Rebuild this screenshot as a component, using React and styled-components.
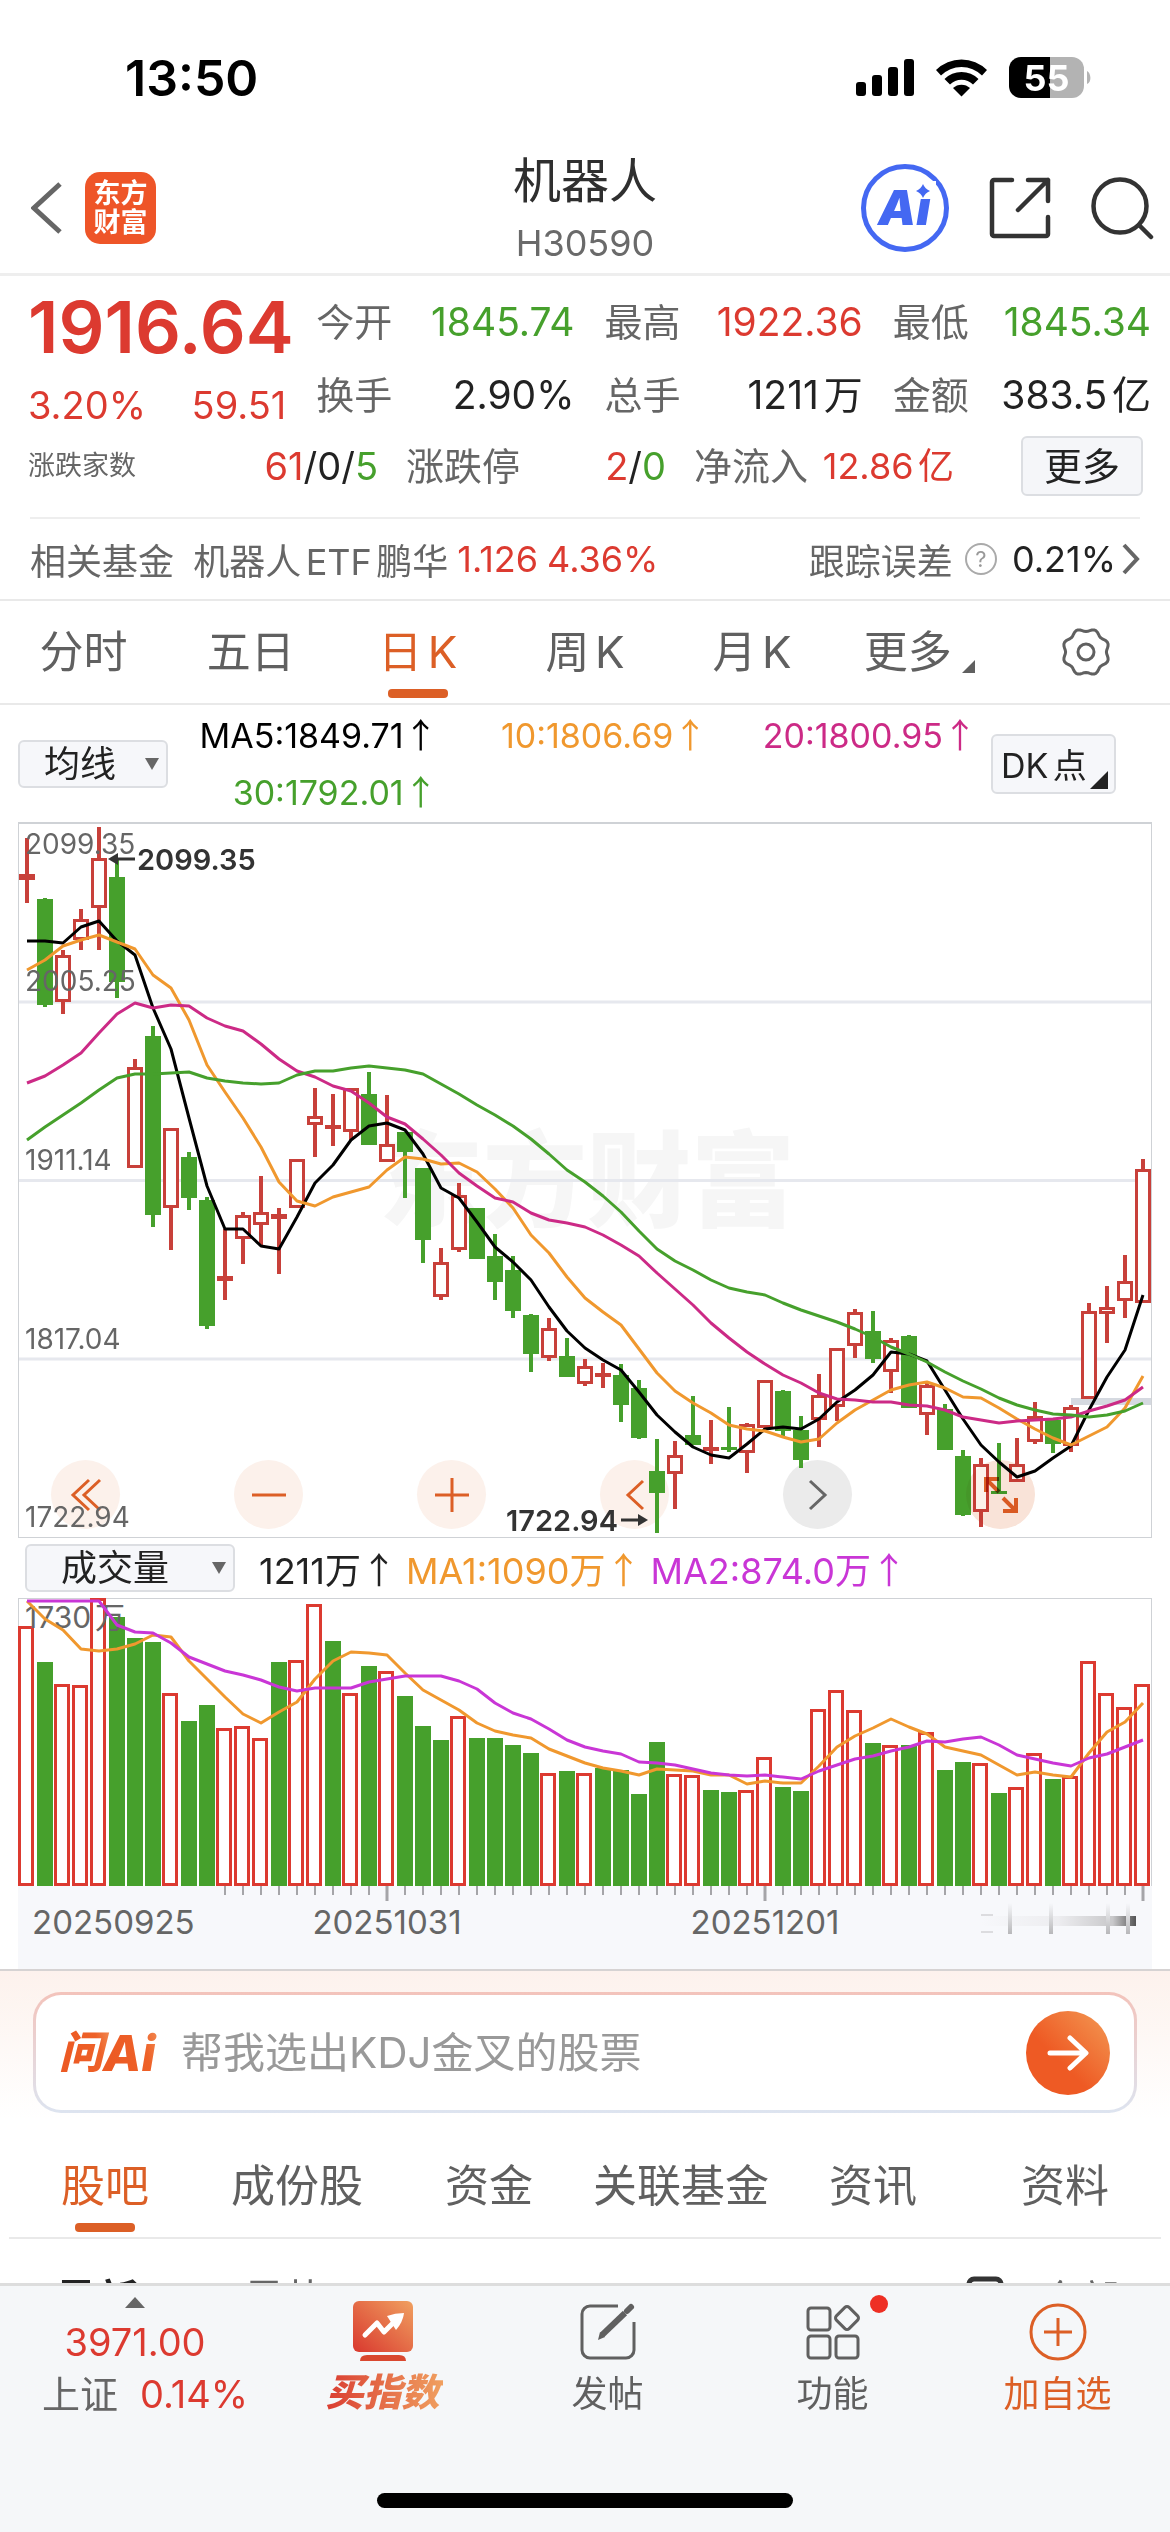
import { Fragment } from 'react';
import styled, { createGlobalStyle } from 'styled-components';

const RED = '#dc3a30';
const GREEN = '#46a02c';
const ORANGE = '#dc5f26';

const GlobalStyle = createGlobalStyle`
  * {
    box-sizing: border-box;
  }
  body {
    margin: 0;
    background: #fff;
    font-family: Inter, 'Noto Sans CJK SC', sans-serif;
    text-autospace: normal;
    color: #222;
  }
  button, select, input {
    font-family: inherit;
    margin: 0;
    padding: 0;
    border: 0;
    background: none;
    color: inherit;
  }
  svg {
    display: block;
    flex: none;
  }
`;

/* ---------- data ---------- */

// [rising, high, body top, body bottom, low]
const candles = [
  [1, 16, 52, 58, 81], [0, 76, 77, 183, 185], [1, 128, 133, 180, 192], [1, 87, 97, 118, 128],
  [1, 5, 36, 86, 128], [0, 38, 55, 160, 176], [1, 237, 245, 346, 346], [0, 204, 214, 393, 405],
  [1, 306, 306, 386, 428], [0, 330, 335, 376, 388], [0, 375, 378, 504, 507], [1, 407, 454, 459, 478],
  [1, 390, 393, 417, 442], [1, 354, 390, 403, 424], [1, 386, 392, 397, 452], [1, 337, 337, 386, 386],
  [1, 266, 294, 303, 335], [1, 272, 303, 307, 324], [1, 266, 266, 310, 318], [0, 250, 272, 323, 323],
  [1, 273, 322, 340, 340], [0, 310, 310, 330, 376], [0, 346, 346, 418, 441], [1, 426, 440, 475, 478],
  [1, 361, 373, 428, 430], [0, 386, 386, 437, 437], [0, 412, 434, 460, 478], [0, 434, 448, 489, 496],
  [0, 492, 493, 532, 550], [1, 496, 506, 536, 539], [0, 516, 534, 555, 555], [1, 537, 544, 562, 564],
  [1, 541, 551, 555, 566], [0, 542, 553, 583, 600], [0, 558, 566, 616, 617], [0, 617, 649, 671, 711],
  [1, 619, 633, 652, 687], [0, 574, 613, 623, 623], [1, 598, 625, 629, 642], [0, 585, 625, 627, 630],
  [1, 601, 602, 631, 651], [1, 558, 558, 606, 607], [0, 568, 569, 609, 616], [0, 594, 608, 638, 646],
  [1, 552, 573, 598, 625], [1, 526, 526, 585, 599], [1, 487, 490, 524, 536], [0, 489, 509, 537, 541],
  [1, 516, 518, 550, 571], [0, 513, 514, 586, 586], [1, 561, 563, 593, 613], [0, 582, 587, 628, 628],
  [0, 628, 634, 693, 694], [1, 636, 642, 690, 705], [0, 621, 669, 672, 672], [1, 616, 642, 660, 660],
  [1, 580, 594, 620, 622], [0, 598, 598, 622, 631], [1, 583, 585, 624, 630], [1, 481, 489, 577, 577],
  [1, 464, 485, 492, 521], [1, 433, 459, 479, 496], [1, 337, 347, 481, 481],
];

const ma30 = [318, 305, 293, 281, 268, 256, 252, 252, 251, 250, 256, 259, 261, 262, 261, 253, 249, 249, 246, 244, 246, 248, 252, 262, 272, 283, 293, 304, 317, 332, 348, 360, 374, 390, 409, 427, 439, 448, 458, 466, 470, 473, 481, 488, 494, 500, 507, 515, 525, 532, 540, 550, 559, 567, 576, 583, 588, 592, 593, 595, 593, 589, 581];
const ma20 = [261, 254, 243, 231, 211, 192, 181, 186, 183, 184, 196, 204, 209, 222, 237, 249, 255, 264, 269, 281, 295, 302, 317, 333, 351, 364, 376, 380, 391, 398, 401, 405, 413, 423, 434, 451, 467, 483, 501, 516, 530, 542, 553, 561, 571, 577, 578, 580, 580, 583, 584, 588, 595, 598, 601, 599, 598, 597, 595, 589, 584, 578, 565];
const ma10 = [148, 138, 124, 118, 113, 120, 127, 153, 166, 198, 243, 270, 296, 325, 360, 379, 384, 375, 370, 365, 348, 335, 337, 342, 341, 350, 367, 386, 413, 431, 455, 476, 490, 503, 527, 551, 569, 581, 591, 603, 607, 609, 615, 620, 617, 601, 588, 578, 568, 563, 560, 566, 575, 576, 586, 597, 607, 616, 623, 614, 605, 586, 554];
const ma5 = [119, 119, 121, 105, 99, 119, 133, 186, 227, 296, 364, 407, 407, 424, 427, 395, 361, 343, 318, 304, 301, 308, 332, 366, 376, 400, 425, 440, 458, 485, 509, 526, 538, 548, 570, 593, 610, 625, 633, 636, 622, 607, 605, 607, 597, 580, 568, 553, 530, 532, 539, 568, 597, 623, 640, 655, 649, 636, 624, 588, 555, 528, 473];

// [rising, top]
const volumes = [
  [1, 28], [0, 64], [1, 86], [1, 87], [1, 0], [0, 19], [0, 40], [0, 44], [1, 95], [0, 123], [0, 107],
  [1, 130], [1, 128], [1, 140], [0, 64], [1, 62], [1, 6], [0, 43], [1, 95], [0, 68], [1, 73], [0, 98],
  [0, 128], [0, 142], [1, 118], [0, 140], [0, 140], [0, 147], [0, 155], [1, 175], [0, 173], [1, 175],
  [0, 170], [0, 172], [0, 196], [0, 144], [1, 176], [1, 177], [0, 192], [0, 194], [1, 192], [1, 159],
  [0, 189], [0, 193], [1, 111], [1, 92], [1, 112], [0, 145], [1, 147], [0, 147], [1, 134], [0, 172],
  [0, 164], [1, 165], [0, 195], [1, 189], [1, 155], [0, 181], [1, 178], [1, 63], [1, 95], [1, 109], [1, 86],
];

const vma1 = [3, 21, 32, 51, 53, 51, 46, 37, 39, 63, 81, 99, 116, 125, 114, 104, 81, 63, 54, 55, 57, 75, 92, 102, 112, 125, 133, 137, 140, 151, 158, 165, 170, 173, 177, 171, 172, 173, 177, 177, 186, 183, 185, 185, 168, 149, 138, 130, 121, 129, 136, 149, 153, 157, 167, 177, 174, 177, 179, 155, 134, 124, 105];
const vma2 = [3, 3, 3, 3, 3, 27, 34, 35, 45, 59, 66, 73, 77, 82, 89, 93, 90, 90, 90, 84, 81, 78, 78, 78, 83, 91, 105, 115, 121, 131, 142, 149, 153, 156, 164, 165, 167, 171, 175, 177, 178, 177, 179, 181, 173, 167, 161, 158, 153, 149, 143, 144, 141, 139, 147, 157, 161, 165, 168, 160, 156, 149, 142];

const STEP = 18;
const cx = (i) => 9 + i * STEP;
const toPoints = (ys) => ys.map((y, i) => `${cx(i)},${y}`).join(' ');

/* ---------- status bar ---------- */

const Page = styled.div`
  display: flex;
  flex-direction: column;
  height: 100vh;
  overflow: hidden;
`;

const StatusBar = styled.div`
  flex: none;
  display: flex;
  justify-content: space-between;
  align-items: center;
  height: 150px;
  padding: 6px 78px 0 125px;
  color: #000;
  font-size: 50px;
  font-weight: 600;
`;

const StatusIcons = styled.div`
  display: flex;
  align-items: center;
  gap: 22px;
`;

const Battery = () => (
  <svg width="83" height="42" viewBox="0 0 83 42">
    <defs>
      <linearGradient id="charge">
        <stop offset="55%" stopColor="#000" />
        <stop offset="55%" stopColor="#b3b3b3" />
      </linearGradient>
    </defs>
    <rect x="0" y="0" width="75" height="41" rx="12" fill="url(#charge)" />
    <path d="M78 14c4 2 5 11 0 13z" fill="#b3b3b3" />
    <text x="37.5" y="34" textAnchor="middle" fontSize="36" fontWeight="700" fill="#fff">
      55
    </text>
  </svg>
);

const SignalIcons = () => (
  <>
    <svg width="58" height="38" viewBox="0 0 58 38">
      <rect x="0" y="23" width="10" height="14" rx="3" />
      <rect x="16" y="16" width="10" height="21" rx="3" />
      <rect x="32" y="8" width="10" height="29" rx="3" />
      <rect x="48" y="0" width="10" height="37" rx="3" />
    </svg>
    <svg width="51" height="38" viewBox="0 0 51 38">
      <path d="M0 11a36 36 0 0 1 51 0l-5 5.500a29 29 0 0 0-41 0z" />
      <path d="M8.500 20a24 24 0 0 1 34 0l-5.500 5.500a16.500 16.500 0 0 0-23 0z" />
      <path d="M17 29a12.500 12.500 0 0 1 17 0l-8.500 8.500z" />
    </svg>
  </>
);

/* ---------- header ---------- */

const Header = styled.header`
  flex: none;
  display: grid;
  grid-template-columns: 1fr auto 1fr;
  align-items: center;
  height: 126px;
  padding: 0 16px;
  border-bottom: 3px solid #eee;
`;

const HeaderSide = styled.div`
  display: flex;
  align-items: center;
  justify-content: ${(p) => (p.$end ? 'flex-end' : 'flex-start')};
  gap: ${(p) => (p.$end ? 40 : 23)}px;
  padding: 0 0 16px ${(p) => (p.$end ? 0 : 15)}px;
`;

const Brand = styled.span`
  display: grid;
  place-content: center;
  width: 71px;
  height: 72px;
  border-radius: 15px;
  background: #ee5528;
  color: #fff;
  font-size: 27px;
  line-height: 29px;
  font-weight: 700;
  text-align: center;
`;

const Titles = styled.div`
  padding-bottom: 8px;
  text-align: center;
`;

const Title = styled.h1`
  margin: 0;
  font-size: 48px;
  line-height: 62px;
  font-weight: 400;
  color: #2f2f2f;
`;

const Code = styled.div`
  color: #6a6a6a;
  font-size: 36px;
  line-height: 62px;
`;

const IconButton = styled.button`
  display: block;
`;

/* ---------- quote ---------- */

const Quote = styled.section`
  flex: none;
  padding: 9px 19px 19px 28px;
`;

const QuoteGrid = styled.div`
  display: grid;
  grid-template-columns: repeat(4, minmax(0, 1fr));
  grid-auto-rows: 73px;
  column-gap: 30px;
  align-items: center;
  height: 149px;
`;

const QuoteFoot = styled(QuoteGrid)`
  grid-template-columns: 350fr 260fr 260fr 169fr;
  grid-auto-rows: 64px;
  column-gap: 28px;
  height: 64px;
`;

const Main = styled.div`
  grid-row: span 2;
  align-self: start;
  display: flex;
  flex-direction: column;
  gap: 6px;
`;

const Price = styled.div`
  color: ${RED};
  font-size: 72px;
  line-height: 84px;
  font-weight: 600;
`;

const Cell = styled.div`
  display: flex;
  justify-content: space-between;
  align-items: center;
  color: ${(p) => p.$color || '#222'};
  font-size: ${(p) => p.$size || 39}px;
  line-height: 60px;
  white-space: nowrap;
`;

const Label = styled.span`
  color: #666;
  font-size: ${(p) => (p.$small ? 27 : 38)}px;
`;

const Tone = styled.span`
  color: ${(p) => p.$color};
`;

const MoreButton = styled.button`
  justify-self: end;
  width: 122px;
  height: 60px;
  margin-right: 8px;
  border: 2px solid #dcdee2;
  border-radius: 6px;
  background: #f5f6f9;
  font-size: 38px;
  line-height: 52px;
`;

const FundRow = styled.section`
  flex: none;
  display: flex;
  align-items: center;
  justify-content: space-between;
  height: 82px;
  margin: 0 30px;
  border-top: 2px solid #eee;
  color: #666;
  font-size: 36px;
`;

const Group = styled.div`
  display: flex;
  align-items: center;
  gap: ${(p) => p.$gap}px;
`;

const Help = styled.button`
  width: 32px;
  height: 32px;
  border: 2px solid #aaa;
  border-radius: 50%;
  color: #999;
  font-size: 22px;
  line-height: 26px;
`;

/* ---------- tabs ---------- */

const Tabs = styled.nav`
  flex: none;
  display: grid;
  grid-template-columns: repeat(${(p) => p.$count}, 1fr);
  height: ${(p) => (p.$count === 7 ? 106 : 104)}px;
  margin: 0 ${(p) => (p.$count === 7 ? 0 : 9)}px;
  border: solid #e9e9e9;
  border-width: ${(p) => (p.$count === 7 ? '2px 0' : '0 0 2px')};
`;

const Tab = styled.button`
  position: relative;
  display: flex;
  align-items: center;
  justify-content: center;
  gap: 10px;
  color: ${(p) => (p.$active ? ORANGE : '#606060')};
  font-size: 44px;
  line-height: 60px;
  white-space: nowrap;

  &::after {
    content: '';
    display: ${(p) => (p.$active ? 'block' : 'none')};
    position: absolute;
    bottom: 5px;
    width: 60px;
    height: 9px;
    border-radius: 4px;
    background: ${ORANGE};
  }
`;

const Corner = styled.i`
  align-self: flex-end;
  border: solid transparent;
  border-width: 0 0 ${(p) => p.$size}px ${(p) => p.$size}px;
  border-bottom-color: ${(p) => p.$color};
  margin-bottom: ${(p) => p.$drop}px;
`;

/* ---------- indicators ---------- */

const Indicators = styled.section`
  flex: none;
  display: flex;
  align-items: center;
  height: 117px;
  padding: 0 54px 0 18px;
`;

const Picker = styled.label`
  position: relative;
  display: block;
  flex: none;
  width: ${(p) => p.$width}px;

  select {
    display: block;
    appearance: none;
    width: 100%;
    height: 48px;
    padding-left: ${(p) => p.$indent}px;
    border: 2px solid #dcdee2;
    border-radius: 6px;
    background: #f6f7fa;
    font-size: 36px;
    line-height: 44px;
    color: #222;
  }

  &::after {
    content: '';
    position: absolute;
    right: 9px;
    top: 18px;
    border: 7px solid transparent;
    border-top: 12px solid #666;
    border-bottom: 0;
    pointer-events: none;
  }
`;

const Averages = styled.div`
  flex: 1;
  display: grid;
  grid-template-columns: repeat(3, 1fr);
  text-align: right;
  font-size: 34px;
  line-height: 57px;
  white-space: nowrap;
  text-autospace: no-autospace;
`;

const Up = styled.span`
  font-family: 'Noto Sans CJK SC', sans-serif;
  line-height: 1;

  &::before {
    content: '↑';
  }
`;

const DkButton = styled.button`
  display: flex;
  align-items: center;
  justify-content: space-between;
  width: 125px;
  height: 60px;
  margin-left: 14px;
  padding: 0 6px 0 8px;
  border: 2px solid #dcdee2;
  border-radius: 6px;
  background: #f6f7fa;
  font-size: 34px;
  white-space: nowrap;
`;

/* ---------- charts ---------- */

const ChartBox = styled.section`
  flex: none;
  position: relative;
  margin: 0 18px;

  > svg {
    position: relative;
    width: 100%;
    height: auto;
    pointer-events: none;
  }
`;

const Controls = styled.div`
  position: absolute;
  left: 33px;
  right: 117px;
  bottom: 9px;
  display: flex;
  justify-content: space-between;
  mix-blend-mode: ${(p) => (p.$over ? 'multiply' : 'normal')};
  pointer-events: none;
`;

const RoundButton = styled.button`
  display: grid;
  place-items: center;
  width: 69px;
  height: 69px;
  margin-left: ${(p) => (p.$last ? 'auto' : 0)};
  border-radius: 50%;
  background: ${(p) => (p.$grey ? '#ebebeb' : '#fcf1eb')};
  pointer-events: auto;
`;

const VolumeRow = styled.section`
  flex: none;
  display: flex;
  align-items: center;
  gap: 24px;
  height: 60px;
  padding-left: 25px;
  font-size: 36px;
  white-space: nowrap;
  text-autospace: no-autospace;
`;

function PriceChart() {
  return (
    <svg viewBox="0 0 1134 716" role="img" aria-label="日K">
      <text x="361" y="397" fontSize="104" fontWeight="900" fill="#f6f6f6">东方财富</text>
      <g stroke="#e6e8ee" strokeWidth="3">
        <path d="M0 180H1134M0 358.500H1134M0 537H1134" />
      </g>
      <rect x="1053" y="576" width="81" height="7" fill="#d5d9e0" />
      {candles.map(([up, high, top, bottom, low], i) => {
        const color = up ? '#c8403a' : GREEN;
        return (
          <Fragment key={i}>
            <path d={`M${cx(i)} ${high}V${low}`} stroke={color} strokeWidth="4" />
            {up ? (
              <rect x={cx(i) - 6.5} y={top + 1.5} width="13" height={Math.max(bottom - top - 3, 1)} fill="#fff" stroke={color} strokeWidth="3" />
            ) : (
              <rect x={cx(i) - 8} y={top} width="16" height={Math.max(bottom - top, 3)} fill={color} />
            )}
          </Fragment>
        );
      })}
      <g fill="none" strokeWidth="3" strokeLinejoin="round">
        <polyline points={toPoints(ma5)} stroke="#000" />
        <polyline points={toPoints(ma10)} stroke="#f0982e" />
        <polyline points={toPoints(ma20)} stroke="#cc2a86" />
        <polyline points={toPoints(ma30)} stroke={GREEN} />
      </g>
      <g fontSize="28" fill="#666">
        <text x="7" y="32">2099.35</text>
        <text x="7" y="169">2005.25</text>
        <text x="7" y="348">1911.14</text>
        <text x="7" y="527">1817.04</text>
        <text x="7" y="705">1722.94</text>
      </g>
      <g fontSize="29" fontWeight="600" fill="#333">
        <text x="119" y="48">2099.35</text>
        <text x="600" y="709" textAnchor="end">1722.94</text>
        <path d="M98 37H117" stroke="#333" strokeWidth="3" />
        <path d="M90 37l10-6v12z" />
        <path d="M603 698H622" stroke="#333" strokeWidth="3" />
        <path d="M630 698l-10-6v12z" />
      </g>
      <rect x="0.5" y="0.5" width="1133" height="715" fill="none" stroke="#cfd2d6" />
      <path d="M0 1H1134" stroke="#cfd2d6" strokeWidth="2" />
    </svg>
  );
}

function VolumeChart() {
  return (
    <svg viewBox="0 0 1134 371" role="img" aria-label="成交量">
      <defs>
        <linearGradient id="scroll">
          <stop offset="0" stopColor="#f7f8fb" />
          <stop offset="0.5" stopColor="#ededf0" />
          <stop offset="0.85" stopColor="#c8c8ca" />
          <stop offset="1" stopColor="#555" />
        </linearGradient>
        <linearGradient id="tick" x2="0" y2="1">
          <stop offset="0" stopColor="#f7f8fb" />
          <stop offset="1" stopColor="#b8b8ba" />
        </linearGradient>
      </defs>
      <rect x="0.5" y="0.5" width="1133" height="300" fill="#fff" stroke="#cfd2d6" />
      <rect x="0" y="288" width="1134" height="83" fill="#f7f8fb" />
      {volumes.map(([up, top], i) =>
        up ? (
          <rect key={i} x={cx(i) - 7.5} y={top + 1.5} width="13" height={285 - top} fill="#fff" stroke="#dc3a30" strokeWidth="3" />
        ) : (
          <rect key={i} x={cx(i) - 8} y={top} width="16" height={288 - top} fill={GREEN} />
        )
      )}
      {volumes.map((_, i) => {
        const month = i === 20 || i === 41 || i === 62;
        return i > 10 && <path key={i} d={`M${cx(i)} 288v${month ? 15 : 9}`} stroke="#a5a5a8" strokeWidth={month ? 3 : 2} />;
      })}
      <text x="7" y="30" fontSize="30" fill="#666">1730万</text>
      <g fill="none" strokeWidth="3" strokeLinejoin="round">
        <polyline points={toPoints(vma1)} stroke="#f0982e" />
        <polyline points={toPoints(vma2)} stroke="#c936d6" />
      </g>
      <g fontSize="33" fill="#666">
        <text x="14" y="336">20250925</text>
        <text x="369" y="336" textAnchor="middle">20251031</text>
        <text x="747" y="336" textAnchor="middle">20251201</text>
      </g>
      <rect x="963" y="318" width="155" height="10" fill="url(#scroll)" />
      <path d="M963 317h12M963 334h12" stroke="#dcdcdf" strokeWidth="2" />
      {[990, 1031, 1088, 1108].map((x) => (
        <rect key={x} x={x} y="305" width="4" height="31" fill="url(#tick)" />
      ))}
    </svg>
  );
}

/* ---------- ask ai ---------- */

const AskSection = styled.section`
  flex: none;
  padding: 21px 33px 22px;
  border-top: 2px solid #d6d3d3;
  background: linear-gradient(#fdf2ed, #fff 90%);
`;

const AskBox = styled.form`
  display: flex;
  align-items: center;
  height: 121px;
  padding: 0 24px 0 20px;
  border: 3px solid transparent;
  border-radius: 28px;
  background: linear-gradient(#fff, #fff) padding-box, linear-gradient(#f3c3bb, #dde4f0) border-box;

  input {
    flex: 1;
    min-width: 0;
    margin-left: 17px;
    outline: 0;
    font-size: 42px;
    line-height: 60px;
    text-autospace: no-autospace;
  }
  input::placeholder {
    color: #999;
    opacity: 1;
  }
`;

const Send = styled.button`
  display: grid;
  place-items: center;
  width: 84px;
  height: 84px;
  border-radius: 50%;
  background: linear-gradient(45deg, #ee5a24 40%, #f39a54);
`;

/* ---------- feed + bottom bar ---------- */

const Feed = styled.section`
  flex: 1 1 0;
  min-height: 0;
  overflow: hidden;
  display: flex;
  align-items: flex-start;
  gap: 104px;
  padding: 31px 50px 0 55px;
  font-size: 42px;
  line-height: 60px;
  color: #666;

  b {
    color: #222;
  }
`;

const FeedFilter = styled.div`
  display: flex;
  gap: 36px;
  margin-left: auto;
  font-size: 40px;

  svg {
    margin-top: 6px;
  }
`;

const BottomBar = styled.footer`
  flex: none;
  border-top: 3px solid #ddd;
  background: #f5f7f9;
`;

const BottomItems = styled.div`
  display: grid;
  grid-template-columns: 270fr repeat(4, 225fr);
  height: 207px;
`;

const BottomItem = styled.button`
  position: relative;
  display: flex;
  flex-direction: column;
  align-items: center;
  padding-top: 15px;
  color: ${(p) => p.$color || '#606060'};
  font-size: 36px;
  line-height: 52px;

  svg {
    margin-bottom: 7px;
  }
`;

const IndexTicker = styled.button`
  display: flex;
  flex-direction: column;
  align-items: center;
  padding-top: 11px;
  color: ${RED};
  font-size: 38px;
  line-height: 52px;
  white-space: nowrap;

  svg {
    margin-bottom: 8px;
  }
`;

const IndexChange = styled(Group)`
  padding-left: 20px;
`;

const BuyLabel = styled.span`
  padding: 0 3px;
  background: linear-gradient(90deg, #d93a30, #f0a060);
  background-clip: text;
  color: transparent;
  font-size: 38px;
  font-style: italic;
  font-weight: 900;
  line-height: 48px;
`;

const Badge = styled.i`
  position: absolute;
  top: 9px;
  left: calc(50% + 37px);
  width: 18px;
  height: 18px;
  border-radius: 50%;
  background: #ee2f24;
`;

const HomeIndicator = styled.div`
  width: 416px;
  height: 15px;
  margin: 0 auto 24px;
  border-radius: 8px;
  background: #000;
`;

const gear = Array.from({ length: 72 }, (_, i) => {
  const a = (i * Math.PI) / 36;
  const r = 22 - 1.6 * Math.cos(8 * a);
  return `${26 + r * Math.cos(a)},${26 + r * Math.sin(a)}`;
}).join(' ');

const Chevron = ({ width, height, flip, color = '#666', stroke = 4 }) => (
  <svg width={width} height={height} viewBox={`0 0 ${width} ${height}`} fill="none" stroke={color} strokeWidth={stroke}>
    <path d={flip ? `M2 2L${width - 3} ${height / 2}L2 ${height - 2}` : `M${width - 2} 2L3 ${height / 2}L${width - 2} ${height - 2}`} />
  </svg>
);

export default function App() {
  return (
    <Page>
      <GlobalStyle />

      <StatusBar>
        <span>13:50</span>
        <StatusIcons>
          <SignalIcons />
          <Battery />
        </StatusIcons>
      </StatusBar>

      <Header>
        <HeaderSide>
          <IconButton aria-label="返回">
            <Chevron width={31} height={52} stroke={5} />
          </IconButton>
          <Brand>
            东方
            <br />
            财富
          </Brand>
        </HeaderSide>
        <Titles>
          <Title>机器人</Title>
          <Code>H30590</Code>
        </Titles>
        <HeaderSide $end>
          <IconButton aria-label="Ai">
            <svg width="88" height="88" viewBox="0 0 88 88">
              <circle cx="44" cy="44" r="41.500" fill="none" stroke="#4468f2" strokeWidth="5" />
              <text x="17" y="61" fontSize="48" fontWeight="900" fontStyle="italic" fill="#4468f2">Ai</text>
              <rect x="53" y="17" width="22" height="17" fill="#fff" />
              <path d="M62 20q2 5 7 7q-5 2-7 7q-2-5-7-7q5-2 7-7z" fill="#4468f2" />
            </svg>
          </IconButton>
          <IconButton aria-label="分享">
            <svg width="62" height="62" viewBox="0 0 62 62" fill="none" stroke="#333" strokeWidth="4.500" strokeLinecap="round" strokeLinejoin="round">
              <path d="M23 3H5a2 2 0 0 0-2 2v52a2 2 0 0 0 2 2h52a2 2 0 0 0 2-2V40M39 3h20v21M59 3L29 33" />
            </svg>
          </IconButton>
          <IconButton aria-label="搜索">
            <svg width="63" height="63" viewBox="0 0 63 63" fill="none" stroke="#333" strokeWidth="4.500" strokeLinecap="round">
              <circle cx="29" cy="29" r="26.500" />
              <path d="M48 48l12 12" />
            </svg>
          </IconButton>
        </HeaderSide>
      </Header>

      <Quote>
        <QuoteGrid>
          <Main>
            <Price>1916.64</Price>
            <Cell $color={RED} $size={38}>
              <span>3.20%</span>
              <span>59.51</span>
            </Cell>
          </Main>
          <Cell $color={GREEN}><Label>今开</Label>1845.74</Cell>
          <Cell $color={RED}><Label>最高</Label>1922.36</Cell>
          <Cell $color={GREEN}><Label>最低</Label>1845.34</Cell>
          <Cell><Label>换手</Label>2.90%</Cell>
          <Cell><Label>总手</Label>1211万</Cell>
          <Cell><Label>金额</Label>383.5亿</Cell>
        </QuoteGrid>
        <QuoteFoot>
          <Cell $size={38}>
            <Label $small>涨跌家数</Label>
            <span><Tone $color={RED}>61</Tone>/0/<Tone $color={GREEN}>5</Tone></span>
          </Cell>
          <Cell $size={38}>
            <Label>涨跌停</Label>
            <span><Tone $color={RED}>2</Tone>/<Tone $color={GREEN}>0</Tone></span>
          </Cell>
          <Cell $color={RED} $size={36}><Label>净流入</Label>12.86亿</Cell>
          <MoreButton>更多</MoreButton>
        </QuoteFoot>
      </Quote>

      <FundRow>
        <Group $gap={9}>
          <span>相关基金</span>
          <span>&nbsp;机器人ETF鹏华</span>
          <Tone $color={RED}>1.126</Tone>
          <Tone $color={RED}>4.36%</Tone>
        </Group>
        <Group $gap={15}>
          <Group $gap={12}>
            <span>跟踪误差</span>
            <Help aria-label="说明">?</Help>
          </Group>
          <Group $gap={6}>
            <Tone $color="#222">0.21%</Tone>
            <Chevron width={18} height={32} flip />
          </Group>
        </Group>
      </FundRow>

      <Tabs $count={7}>
        <Tab>分时</Tab>
        <Tab>五日</Tab>
        <Tab $active>日K</Tab>
        <Tab>周K</Tab>
        <Tab>月K</Tab>
        <Tab>更多<Corner $size={13} $drop={30} $color="#606060" /></Tab>
        <Tab aria-label="设置">
          <svg width="52" height="52" viewBox="0 0 52 52" fill="none" stroke="#606060" strokeWidth="3">
            <polygon points={gear} strokeLinejoin="round" />
            <circle cx="26" cy="26" r="8" />
          </svg>
        </Tab>
      </Tabs>

      <Indicators>
        <Picker $width={150} $indent={24}>
          <select aria-label="指标"><option>均线</option></select>
        </Picker>
        <Averages>
          <Tone $color="#000">MA5:1849.71<Up /></Tone>
          <Tone $color="#f0982e">10:1806.69<Up /></Tone>
          <Tone $color="#cc2a86">20:1800.95<Up /></Tone>
          <Tone $color={GREEN}>30:1792.01<Up /></Tone>
        </Averages>
        <DkButton>DK点<Corner $size={18} $drop={3} $color="#222" /></DkButton>
      </Indicators>

      <ChartBox>
        <Controls>
          <RoundButton aria-label="最早">
            <svg width="34" height="34" viewBox="0 0 34 34" fill="none" stroke={ORANGE} strokeWidth="3">
              <path d="M20 2L4 17L20 32M31 2L15 17L31 32" />
            </svg>
          </RoundButton>
          <RoundButton aria-label="缩小">
            <svg width="34" height="34" fill="none" stroke={ORANGE} strokeWidth="3"><path d="M0 17h34" /></svg>
          </RoundButton>
          <RoundButton aria-label="放大">
            <svg width="34" height="34" fill="none" stroke={ORANGE} strokeWidth="3"><path d="M0 17h34M17 0v34" /></svg>
          </RoundButton>
          <RoundButton aria-label="向前">
            <Chevron width={20} height={32} color={ORANGE} stroke={3} />
          </RoundButton>
          <RoundButton $grey aria-label="向后">
            <Chevron width={20} height={32} flip stroke={3} />
          </RoundButton>
          <RoundButton as="span" />
        </Controls>
        <PriceChart />
        <Controls $over>
          <RoundButton $last aria-label="全屏">
            <svg width="36" height="36" viewBox="0 0 36 36" fill="none" stroke={ORANGE} strokeWidth="4">
              <path d="M16 2H3v13M3 2l13 13M20 34h13V21M33 34L20 21" />
            </svg>
          </RoundButton>
        </Controls>
      </ChartBox>

      <VolumeRow>
        <Picker $width={210} $indent={34}>
          <select aria-label="副图"><option>成交量</option></select>
        </Picker>
        <Group $gap={9}>
          <span>1211万<Up /></span>
          <Tone $color="#f0982e">MA1:1090万<Up /></Tone>
          <Tone $color="#c936d6">MA2:874.0万<Up /></Tone>
        </Group>
      </VolumeRow>

      <ChartBox>
        <VolumeChart />
      </ChartBox>

      <AskSection>
        <AskBox>
          <svg width="108" height="64" viewBox="0 0 108 64" role="img" aria-label="问Ai">
            <defs>
              <linearGradient id="ask" x2="1" y2="-0.300">
                <stop offset="0" stopColor="#ec5a24" />
                <stop offset="0.600" stopColor="#ee6128" />
                <stop offset="1" stopColor="#f39a62" />
              </linearGradient>
            </defs>
            <g fontStyle="italic" fontWeight="800" fill="url(#ask)">
              <text x="3" y="47" fontSize="44">问</text>
              <text x="47" y="50" fontSize="50">Ai</text>
            </g>
          </svg>
          <input aria-label="问Ai" placeholder="帮我选出KDJ金叉的股票" />
          <Send type="button" aria-label="发送">
            <svg width="42" height="38" viewBox="0 0 42 38" fill="none" stroke="#fff" strokeWidth="5" strokeLinecap="round" strokeLinejoin="round">
              <path d="M3 19h35M23 4l16 15-16 15" />
            </svg>
          </Send>
        </AskBox>
      </AskSection>

      <Tabs $count={6}>
        <Tab $active>股吧</Tab>
        <Tab>成份股</Tab>
        <Tab>资金</Tab>
        <Tab>关联基金</Tab>
        <Tab>资讯</Tab>
        <Tab>资料</Tab>
      </Tabs>

      <Feed>
        <b>最新</b>
        <span>最热</span>
        <FeedFilter>
          <svg width="38" height="38" viewBox="0 0 38 38" fill="none" stroke="#333" strokeWidth="5">
            <rect x="3" y="3" width="32" height="32" rx="5" />
          </svg>
          全部
        </FeedFilter>
      </Feed>

      <BottomBar>
        <BottomItems>
          <IndexTicker>
            <svg width="20" height="11" viewBox="0 0 20 11" fill="#666"><path d="M10 0l10 11H0z" /></svg>
            <span>3971.00</span>
            <IndexChange $gap={22}><Label>上证</Label>0.14%</IndexChange>
          </IndexTicker>
          <BottomItem>
            <svg width="60" height="60" viewBox="0 0 60 60">
              <defs>
                <linearGradient id="buy" x1="0" y1="1" x2="1" y2="0">
                  <stop offset="0" stopColor="#d9382e" />
                  <stop offset="1" stopColor="#f0a060" />
                </linearGradient>
              </defs>
              <rect width="60" height="51" rx="6" fill="url(#buy)" />
              <path d="M7 60q0-6 7-6h32q7 0 7 6z" fill="#d9482f" />
              <path d="M12 34l12-12 7 9 12-12" fill="none" stroke="#fff" strokeWidth="5" strokeLinecap="round" strokeLinejoin="round" />
              <path d="M34 15q8-3 17-3q-1 9-8 17z" fill="#fff" />
            </svg>
            <BuyLabel>买指数</BuyLabel>
          </BottomItem>
          <BottomItem>
            <svg width="56" height="60" viewBox="0 0 56 60" fill="none" stroke="#606060" strokeWidth="3">
              <path d="M38 5H10a8 8 0 0 0-8 8v36a8 8 0 0 0 8 8h36a8 8 0 0 0 8-8V21" />
              <path d="M22 34L45 12" strokeWidth="6" />
              <path d="M18 39l2-8 5 5z" fill="#606060" stroke="none" />
              <path d="M47 10l4-4" strokeWidth="6" strokeLinecap="round" />
            </svg>
            发帖
          </BottomItem>
          <BottomItem>
            <svg width="54" height="60" viewBox="0 0 54 60" fill="none" stroke="#606060" strokeWidth="3" strokeLinejoin="round">
              <rect x="2" y="7" width="22" height="22" rx="3" />
              <rect x="2" y="35" width="22" height="22" rx="3" />
              <rect x="30" y="35" width="22" height="22" rx="3" />
              <rect x="32" y="8" width="18" height="18" rx="3" transform="rotate(45 41 17)" />
            </svg>
            功能
            <Badge />
          </BottomItem>
          <BottomItem $color={ORANGE}>
            <svg width="58" height="60" viewBox="0 0 58 60" fill="none" stroke={ORANGE} strokeWidth="3">
              <circle cx="29" cy="31" r="27" />
              <path d="M15 31h28M29 17v28" />
            </svg>
            加自选
          </BottomItem>
        </BottomItems>
        <HomeIndicator />
      </BottomBar>
    </Page>
  );
}
